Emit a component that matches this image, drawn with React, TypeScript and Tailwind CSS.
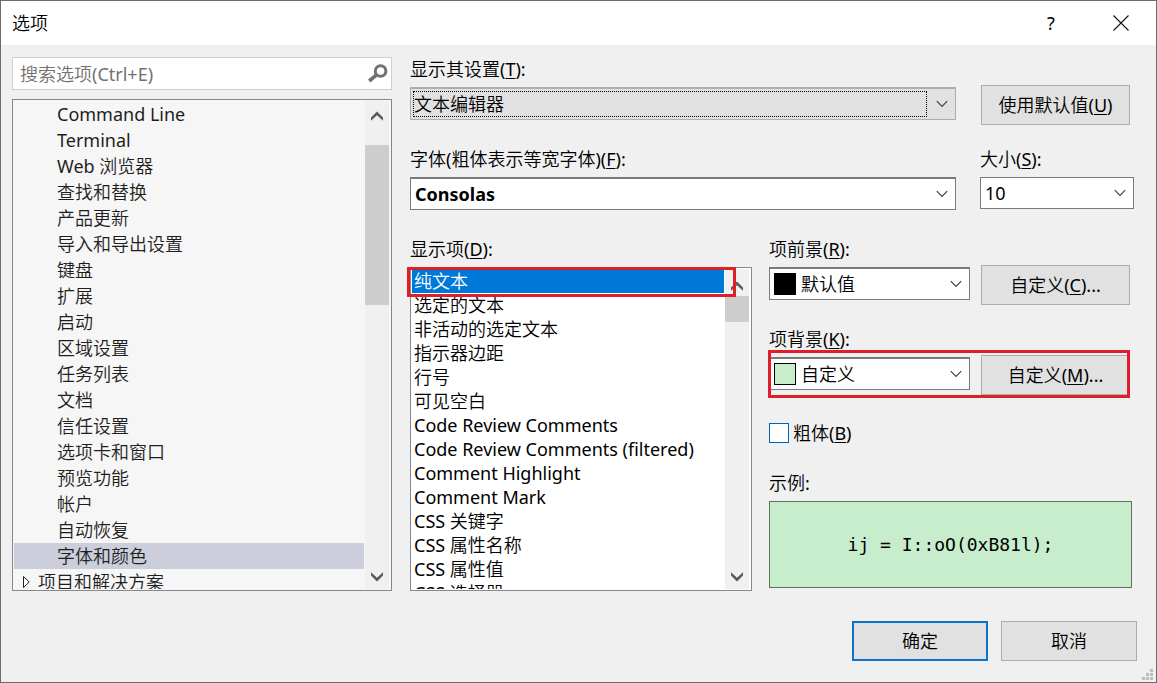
import { useState, type ReactNode } from "react";

const TREE_ITEMS = [
  "Command Line", "Terminal", "Web 浏览器", "查找和替换", "产品更新", "导入和导出设置", "键盘", "扩展", "启动",
  "区域设置", "任务列表", "文档", "信任设置", "选项卡和窗口", "预览功能", "帐户", "自动恢复", "字体和颜色",
];

const DISPLAY_ITEMS = [
  "纯文本", "选定的文本", "非活动的选定文本", "指示器边距", "行号", "可见空白", "Code Review Comments",
  "Code Review Comments (filtered)", "Comment Highlight", "Comment Mark", "CSS 关键字", "CSS 属性名称",
  "CSS 属性值", "CSS 选择器",
];

function Key({ children }: { children: string }) {
  return <span className="underline decoration-1 underline-offset-2">{children}</span>;
}

function Chevron({ className }: { className: string }) {
  return (
    <svg viewBox="0 0 12 8" className={`pointer-events-none absolute h-2 w-3 ${className}`} fill="none" stroke="#404040" strokeWidth="1.2" aria-hidden="true">
      <path d="M0.8 1.2 6 6.4 11.2 1.2" />
    </svg>
  );
}

function ScrollBar({ thumb, name }: { thumb: string; name: string }) {
  return (
    <div className="mr-px flex w-6 shrink-0 flex-col bg-[#f0f0f0]">
      <button type="button" aria-label={`${name} 向上滚动`} className={`flex w-6 shrink-0 items-center justify-center ${thumb === "large" ? "h-11 pb-3.5" : "h-[27px] pt-1.5"}`}>
        <svg viewBox="0 0 12 10" className="h-2.5 w-3" fill="#5a5a5a" aria-hidden="true">
          <path d="M6 .5 12 6.500V9.800L6 4.200 0 9.800V6.500Z" />
        </svg>
      </button>
      <div className={`shrink-0 bg-[#cdcdcd] ${thumb === "large" ? "h-40" : "h-[26px]"}`} />
      <div className="flex-1" />
      <button type="button" aria-label={`${name} 向下滚动`} className="flex h-6 w-6 shrink-0 items-center justify-center">
        <svg viewBox="0 0 12 10" className="h-2.5 w-3" fill="#5a5a5a" aria-hidden="true">
          <path d="M6 9.500 12 3.500V.2L6 5.800 0 .2V3.500Z" />
        </svg>
      </button>
    </div>
  );
}

function PushButton({ children, className }: { children: ReactNode; className: string }) {
  return (
    <button type="button" className={`h-10 shrink-0 border bg-[#e1e1e1] whitespace-nowrap ${className}`}>
      {children}
    </button>
  );
}

function ColorPicker({ id, label, value, swatch }: { id: string; label: ReactNode; value: string; swatch: string }) {
  return (
    <div className="flex flex-1 flex-col gap-1.5">
      <label htmlFor={id}>{label}</label>
      <div className="relative">
        <select id={id} className="h-[33px] w-full appearance-none border border-t-2 border-[#7a7a7a] bg-white pl-[31px]">
          <option>{value}</option>
        </select>
        <span className={`pointer-events-none absolute top-[6px] left-[5px] h-[22px] w-[22px] border border-black ${swatch}`} />
        <Chevron className="top-[13px] right-2" />
      </div>
    </div>
  );
}

export default function App() {
  const [page, setPage] = useState("字体和颜色");
  const [item, setItem] = useState("纯文本");
  const [bold, setBold] = useState(false);

  return (
    <div className="flex h-screen min-h-[640px] flex-col border border-[#6b6b6b] bg-[#f0f0f0] font-['Noto_Sans','Noto_Sans_CJK_SC_DemiLight','Noto_Sans_CJK_SC',sans-serif] text-[18px] leading-6 text-black">
      <header className="flex h-11 shrink-0 items-center bg-white pl-[11px]">
        <h1 className="flex-1">选项</h1>
        <button type="button" aria-label="帮助" className="h-11 w-[70px]">?</button>
        <button type="button" aria-label="关闭" className="flex h-11 w-[70px] items-center justify-center">
          <svg viewBox="0 0 16 16" className="h-4 w-4" fill="none" stroke="#111" strokeWidth="1.1" aria-hidden="true">
            <path d="M.5.5 15.500 15.500M15.500.5.5 15.500" />
          </svg>
        </button>
      </header>

      <main className="flex min-h-0 flex-1 gap-[18px] pt-3 pr-[22px] pl-[11px]">
        <div className="flex w-[380px] shrink-0 flex-col gap-[9px]">
          <div className="relative">
            <input type="search" aria-label="搜索选项" placeholder="搜索选项(Ctrl+E)" className="block h-[33px] w-full border border-[#cccedb] bg-white px-[7px] placeholder:text-[#717171]" />
            <svg viewBox="0 0 20 20" className="pointer-events-none absolute top-[6px] right-1 h-5 w-5" fill="none" stroke="#717171" aria-hidden="true">
              <circle cx="12.600" cy="8" r="5.300" strokeWidth="3" />
              <path d="M8.800 11.600 1.200 18" strokeWidth="3.800" />
            </svg>
          </div>
          <div className="flex min-h-0 flex-1 border border-[#828790] bg-[#f6f6f6] p-px">
            <ul role="tree" aria-label="选项页" className="mr-px min-w-0 flex-1 overflow-hidden text-[#1e1e1e]">
              {TREE_ITEMS.map((name) => (
                <li key={name} role="treeitem" aria-selected={page === name} onClick={() => setPage(name)} className={`h-[26px] pl-[43px] leading-[26px] ${page === name ? "bg-[#cccedb]" : ""}`}>
                  {name}
                </li>
              ))}
              <li role="treeitem" aria-expanded="false" className="flex h-[26px] items-center gap-2 pl-[9px] leading-[26px]">
                <svg viewBox="0 0 7 12" className="h-3 w-[7px]" fill="white" stroke="#1e1e1e" aria-hidden="true">
                  <path d="M.5 .5V11.500L6.200 6Z" />
                </svg>
                项目和解决方案
              </li>
            </ul>
            <ScrollBar thumb="large" name="选项页" />
          </div>
        </div>

        <div className="flex min-w-0 flex-1 flex-col">
          <div className="flex h-[90px] shrink-0 gap-6">
            <div className="flex flex-1 flex-col gap-1.5">
              <label htmlFor="settings">显示其设置(<Key>T</Key>):</label>
              <div className="relative">
                <select id="settings" className="h-[33px] w-full appearance-none border border-t-2 border-[#adadad] bg-[#e1e1e1] pl-[3px]">
                  <option>文本编辑器</option>
                </select>
                <span className="pointer-events-none absolute top-1 right-[29px] bottom-[3px] left-[3px] border border-dotted border-black" />
                <Chevron className="top-[13px] right-2" />
              </div>
            </div>
            <div className="w-[154px] pt-7">
              <PushButton className="ml-px w-[149px] border-[#adadad]">使用默认值(<Key>U</Key>)</PushButton>
            </div>
          </div>

          <div className="flex h-[90px] shrink-0 gap-6">
            <div className="flex flex-1 flex-col gap-1.5">
              <label htmlFor="font">字体(粗体表示等宽字体)(<Key>F</Key>):</label>
              <div className="relative">
                <select id="font" className="h-[33px] w-full appearance-none border border-t-2 border-[#7a7a7a] bg-white pl-1 font-bold">
                  <option>Consolas</option>
                </select>
                <Chevron className="top-[13px] right-2" />
              </div>
            </div>
            <div className="flex w-[154px] flex-col gap-1.5">
              <label htmlFor="size">大小(<Key>S</Key>):</label>
              <div className="relative">
                <select id="size" className="h-8 w-full appearance-none border border-[#7a7a7a] bg-white pl-1">
                  <option>10</option>
                </select>
                <Chevron className="top-3 right-2" />
              </div>
            </div>
          </div>

          <div className="flex min-h-0 flex-1 gap-[17px]">
            <div className="flex min-w-0 flex-1 flex-col gap-1.5">
              <span id="items-label">显示项(<Key>D</Key>):</span>
              <div className="relative flex min-h-0 flex-1 border border-[#828790] bg-white p-px">
                <ul role="listbox" aria-labelledby="items-label" className="mr-px min-w-0 flex-1 overflow-hidden">
                  {DISPLAY_ITEMS.map((name) => (
                    <li key={name} role="option" aria-selected={item === name} onClick={() => setItem(name)} className={`h-6 pl-0.5 whitespace-nowrap ${item === name ? "bg-[#0078d7] text-white" : ""}`}>
                      {name}
                    </li>
                  ))}
                </ul>
                <ScrollBar thumb="small" name="显示项" />
                <span className="pointer-events-none absolute -top-px right-[15px] -left-1 h-[30px] border-3 border-[#dc1f2a]" />
              </div>
            </div>

            <div className="flex w-[365px] shrink-0 flex-col">
              <div className="flex h-[90px] shrink-0 gap-[11px] pr-1">
                <ColorPicker id="foreground" label={<>项前景(<Key>R</Key>):</>} value="默认值" swatch="bg-black" />
                <PushButton className="mt-7 w-[149px] border-[#adadad]">自定义(<Key>C</Key>)...</PushButton>
              </div>
              <div className="relative flex h-[90px] shrink-0 gap-[11px] pr-1">
                <ColorPicker id="background" label={<>项背景(<Key>K</Key>):</>} value="自定义" swatch="bg-[#c7edcc]" />
                <PushButton className="mt-7 w-[149px] border-[#adadad]">自定义(<Key>M</Key>)...</PushButton>
                <span className="pointer-events-none absolute top-[23px] right-1 -left-px h-12 border-3 border-[#dc1f2a]" />
              </div>
              <label className="flex h-[54px] shrink-0 items-start gap-1 pt-1">
                <input type="checkbox" checked={bold} onChange={(e) => setBold(e.target.checked)} className="mt-0.5 h-5 w-5 appearance-none border border-[#0066b4] bg-white checked:bg-[#0078d7]" />
                <span>粗体(<Key>B</Key>)</span>
              </label>
              <span>示例:</span>
              <div className={`mt-1.5 mr-0.5 mb-[3px] flex min-h-0 flex-1 items-center justify-center border border-[#5f7061] bg-[#c7edcc] font-['DejaVu_Sans_Mono',monospace] whitespace-pre ${bold ? "font-bold" : ""}`}>
                ij = I::oO(0xB81l);
              </div>
            </div>
          </div>
        </div>
      </main>

      <footer className="relative flex shrink-0 justify-end gap-[13px] pt-[30px] pr-[19px] pb-[21px]">
        <PushButton className="w-[136px] border-2 border-[#0f74c8]">确定</PushButton>
        <PushButton className="w-[136px] border-[#adadad]">取消</PushButton>
        <svg viewBox="0 0 12 12" className="absolute right-[2px] bottom-px h-3 w-3" fill="#bdbdbd" aria-hidden="true">
          <path d="M8 0h3v3H8zM4 4h3v3H4zM8 4h3v3H8zM0 8h3v3H0zM4 8h3v3H4zM8 8h3v3H8z" />
        </svg>
      </footer>
    </div>
  );
}
